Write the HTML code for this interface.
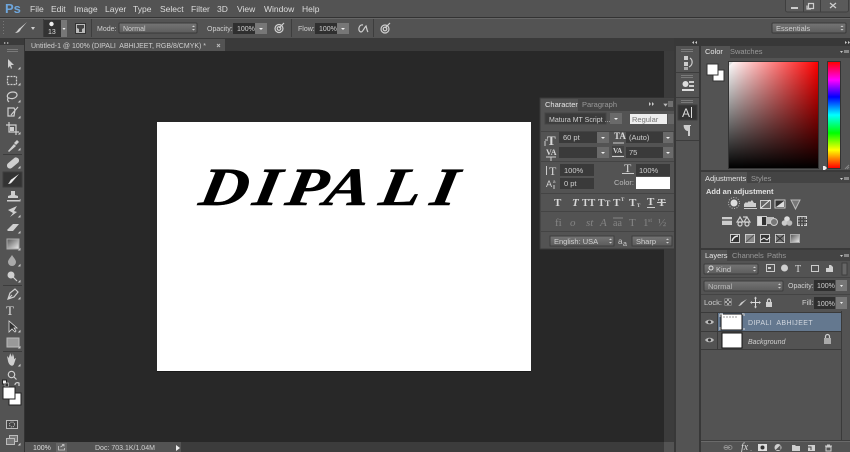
<!DOCTYPE html>
<html><head><meta charset="utf-8"><style>
html,body{margin:0;padding:0;background:#282828;width:850px;height:452px;overflow:hidden}
svg{display:block;filter:blur(.25px)}
text{font-family:"Liberation Sans",sans-serif;font-size:7.5px;fill:#d0d0d0}
.m{font-size:8.5px;fill:#dcdcdc}
.i{fill:none;stroke:#cfcfcf;stroke-width:1.2}
.g{fill:#cfcfcf}
.f{fill:none;stroke:#8a8a8a;stroke-width:1}
.t{font-family:"Liberation Serif",serif;font-size:11px;fill:#d8d8d8;font-weight:bold}
.u{font-family:"Liberation Serif",serif;font-size:11px;fill:#858585}
.b{fill:#e6e6e6}
</style></head><body>
<svg width="850" height="452" viewBox="0 0 850 452" xmlns="http://www.w3.org/2000/svg">
<defs>
<linearGradient id="h" x1="0" x2="1" y1="0" y2="0"><stop offset="0" stop-color="#fff"/><stop offset="1" stop-color="#f00"/></linearGradient>
<linearGradient id="v" x1="0" x2="0" y1="0" y2="1"><stop offset="0" stop-color="#000" stop-opacity="0"/><stop offset="1" stop-color="#000"/></linearGradient>
<linearGradient id="hue" x1="0" x2="0" y1="0" y2="1"><stop offset="0" stop-color="#f00"/><stop offset=".17" stop-color="#f0f"/><stop offset=".33" stop-color="#00f"/><stop offset=".5" stop-color="#0ff"/><stop offset=".67" stop-color="#0f0"/><stop offset=".83" stop-color="#ff0"/><stop offset="1" stop-color="#f00"/></linearGradient>
<linearGradient id="gr" x1="0" x2="1" y1="0" y2="1"><stop offset="0" stop-color="#555"/><stop offset="1" stop-color="#eee"/></linearGradient>
<linearGradient id="sel" x1="0" x2="0" y1="0" y2="1"><stop offset="0" stop-color="#757575"/><stop offset="1" stop-color="#5c5c5c"/></linearGradient>
</defs>

<!-- chrome -->
<rect width="850" height="452" fill="#282828"/>
<rect width="850" height="38" fill="#535353"/>
<rect y="17" width="850" height="1" fill="#333"/>
<rect y="18" width="850" height="1" fill="#666"/>
<rect y="38" width="850" height="13" fill="#3a3a3a"/>

<!-- menu -->
<text x="5" y="13" style="font-size:13px;font-weight:bold;fill:#6ea6dc">Ps</text>
<text class="m" x="30" y="12">File</text><text class="m" x="51" y="12">Edit</text><text class="m" x="74" y="12">Image</text><text class="m" x="105" y="12">Layer</text><text class="m" x="133" y="12">Type</text><text class="m" x="160" y="12">Select</text><text class="m" x="191" y="12">Filter</text><text class="m" x="217" y="12">3D</text><text class="m" x="237" y="12">View</text><text class="m" x="264" y="12">Window</text><text class="m" x="302" y="12">Help</text>
<!-- window controls -->
<rect x="785.500" y="-2" width="63" height="14" rx="2" fill="#5a5a5a" stroke="#3f3f3f"/>
<path d="M803.500 0v12M820.500 0v12" stroke="#3f3f3f"/>
<rect x="791" y="7" width="7" height="2" fill="#ccc"/>
<path d="M808.500 3.500h5v5h-5zM807 5.500v3.500h4" class="i" stroke-width=".9"/>
<path d="M830 3l6 5M836 3l-6 5" class="i"/>

<!-- options bar -->
<path d="M3.500 21v15" stroke="#777" stroke-dasharray="1 2"/>
<path d="M15 33c4 0 5-2 6-4l6-7-7 6c-2 1-2 3-5 5z" class="g"/>
<path d="M31 27l4 0-2 3z" class="g"/>
<path d="M43.500 19v18M91.500 19v18M291.500 19v18M373.500 19v18" stroke="#3d3d3d"/>
<rect x="44" y="20" width="17" height="17" fill="#333"/>
<circle cx="51.500" cy="24" r="2.200" fill="#eee"/>
<text x="48" y="34" style="font-size:7px;fill:#ddd">13</text>
<rect x="61" y="20" width="6" height="17" fill="#777"/><path d="M62.500 28h3l-1.500 2z" fill="#eee"/>
<rect x="75.500" y="23.500" width="10" height="10" fill="#bbb" stroke="#333"/><path d="M77 25h7v3l-2 1v3h-3v-3l-2-1z" fill="#444"/>
<text x="97" y="31" style="font-size:7px">Mode:</text>
<rect x="119" y="23" width="78" height="10" rx="1" fill="url(#sel)" stroke="#3a3a3a"/><text x="123" y="31" style="font-size:7px">Normal</text><path d="M192 27l1.500-1.500 1.500 1.500zM192 29l1.500 1.500 1.500-1.500z" class="g"/>
<text x="207" y="31" style="font-size:7px">Opacity:</text>
<rect x="233" y="23" width="22" height="11" fill="#2f2f2f"/><text x="237" y="31" style="font-size:7px">100%</text>
<rect x="255" y="23" width="12" height="11" fill="#777"/><path d="M259 28h4l-2 2z" fill="#eee"/>
<circle cx="279" cy="28.500" r="4" class="i"/><circle cx="279" cy="28.500" r="1.800" class="i"/><path d="M279 28l5-5" class="i"/>
<text x="298" y="31" style="font-size:7px">Flow:</text>
<rect x="315" y="23" width="22" height="11" fill="#2f2f2f"/><text x="319" y="31" style="font-size:7px">100%</text>
<rect x="337" y="23" width="12" height="11" fill="#777"/><path d="M341 28h4l-2 2z" fill="#eee"/>
<path d="M363 25c-4-1-6 6-2 7 2 0 3-4 5-6 1 3 1 5 2 6" class="i"/>
<circle cx="385" cy="29" r="4" class="i"/><circle cx="385" cy="29" r="1.800" class="i"/><path d="M385 28l5-5" class="i"/>
<rect x="772" y="23" width="74" height="10" rx="1" fill="url(#sel)" stroke="#3a3a3a"/><text x="776" y="31">Essentials</text><path d="M840.500 27l1.500-1.500 1.500 1.500zM840.500 29l1.500 1.500 1.500-1.500z" class="g"/>

<!-- tab -->
<rect x="25" y="39" width="200" height="12" fill="#535353"/>
<text x="31" y="48" style="font-size:7px;fill:#cfcfcf">Untitled-1 @ 100% (DIPALI&#160; ABHIJEET, RGB/8/CMYK) *</text>
<path d="M217 44l3 3M220 44l-3 3" stroke="#bbb"/>

<!-- left toolbar -->
<rect x="0" y="38" width="25" height="414" fill="#535353"/>
<rect x="0" y="38" width="25" height="7" fill="#3a3a3a"/>
<rect x="24" y="38" width="1" height="414" fill="#333"/>
<path d="M4 42l2 1-2 1zM7 42l2 1-2 1z" fill="#bbb"/>
<path d="M7 49.500h11M7 51.500h11" stroke="#7a7a7a"/>
<path d="M3 154.500h19M3 285.500h19M3 351.500h19" stroke="#3c3c3c"/>
<g>
<path d="M8 59v9l2-2 1 3 1-1-1-3h3zM15 62v5M13 64.500h4" class="g"/>
<rect x="7.500" y="76.500" width="9" height="8" class="i" stroke-dasharray="2 1"/>
<path d="M8 98c-2-3 1-6 5-6s5 3 3 5-5 2-7 1zM8 98c-1 2 0 3 1 4" class="i"/>
<path d="M8 108h6l1 2-1 6H8zM11 115l7-8" class="i"/>
<path d="M9 122v10h10M6 125h10v10" class="i" stroke-width="1.300"/><rect x="10" y="127" width="4" height="4" class="g"/>
<path d="M8 151l6-7 2 2-7 6zM14 143l3-3 2 2-3 3z" class="g"/>
<rect x="6" y="160" width="14" height="6" rx="3" transform="rotate(-40 13 163)" class="g"/>
<path d="M11 191h4v4l3 1v2H8v-2l3-1zM7 200h12v1.500H7z" class="g"/>
<path d="M8 210l9-4-3 5 3 1-7 5 3-4-5-3z" class="g"/>
<path d="M7 230l6-6h6l-6 7H8z" class="g"/>
<rect x="7" y="239" width="12" height="10" fill="url(#gr)" stroke="#aaa"/>
<path d="M12 255c-2 3-4 5-4 7a4 4 0 0 0 8 0c0-2-2-4-4-7z" fill="#aaa"/>
<circle cx="11" cy="275" r="3.500" class="g"/><path d="M13 277l4 4" class="i" stroke-width="2"/>
<path d="M8 299l2-6 5-4 3 3-4 5zM8 299l4-4" class="i"/>
<text x="6" y="315" style="font-family:'Liberation Serif',serif;font-size:13px;fill:#ddd">T</text>
<path d="M9 321v11l3-3 3 3 1-1-2-3h3z" fill="#333" stroke="#ddd" stroke-width=".8"/>
<rect x="7" y="338" width="12" height="9" fill="#999" stroke="#bbb"/>
<path d="M8 361l-1-5 2 2v-4l1 3v-4l2 4v-4l1 4 1-3v5l2-1-2 6c-1 3-5 2-6-3z" class="g"/>
<circle cx="11.500" cy="374.500" r="3.200" class="i" stroke-width="1.400"/><path d="M14 377l2.500 2.500" class="i" stroke-width="2"/>
<rect x="2.500" y="380" width="4" height="4" fill="#eee" stroke="#222"/><rect x="5" y="383" width="3.500" height="3.500" fill="#333" stroke="#ddd" stroke-width=".6"/>
<path d="M15 385c0-2 2-3 4-2v3" class="i"/>
<rect x="9" y="393" width="12" height="12" fill="#fff" stroke="#222"/>
<rect x="3" y="387" width="12" height="12" fill="#fff" stroke="#222"/>
<rect x="6.500" y="420.500" width="11" height="8" fill="#444" stroke="#bbb"/><circle cx="12" cy="424.500" r="2.500" fill="none" stroke="#ccc" stroke-dasharray="1 1"/>
<rect x="9.500" y="435.500" width="8" height="6" fill="#777" stroke="#bbb"/><rect x="6.500" y="438.500" width="8" height="6" fill="#777" stroke="#bbb"/>
</g>
<path d="M19 69h1v-1zM19 85h1v-1zM19 102h1v-1zM19 118h1v-1zM19 134h1v-1zM19 150h1v-1zM19 168h1v-1zM19 201h1v-1zM19 217h1v-1zM19 233h1v-1zM19 250h1v-1zM19 266h1v-1zM19 282h1v-1zM19 299h1v-1zM19 332h1v-1zM19 348h1v-1zM19 366h1v-1zM19 445h1v-1z" stroke="#ccc"/>
<rect x="3" y="172" width="19" height="15" fill="#333" stroke="#3e3e3e"/>
<path d="M8 184c3 0 4-2 5-3l6-7-7 5c-2 1-2 3-4 5z" fill="#eee"/>

<!-- document -->
<rect x="25" y="51" width="639" height="391" fill="#282828"/>
<rect x="157" y="122" width="374" height="249" fill="#fff"/>
<rect x="157" y="371" width="374" height="1" fill="#1a1a1a"/>
<g transform="matrix(1.25,0,-0.18,1,0,205)">
<text y="0" x="158 201 227 258 302 343" style="font-family:'Liberation Serif',serif;font-size:54px;font-style:italic;font-weight:bold;fill:#000;stroke:#000;stroke-width:.5">DIPALI</text>
</g>

<!-- scrollbars / status -->
<rect x="664" y="51" width="10" height="391" fill="#3c3c3c"/>
<rect x="25" y="442" width="639" height="10" fill="#3c3c3c"/>
<rect x="25" y="442" width="156" height="10" fill="#535353"/>
<rect x="664" y="442" width="10" height="10" fill="#535353"/>
<text x="33" y="450" style="font-size:7px;fill:#ddd">100%</text>
<rect x="56" y="443" width="11" height="9" fill="#666"/><path d="M58.500 446v4h6v-2M60.500 447l3-2M62 444.500h2v2" fill="none" stroke="#ccc" stroke-width=".8"/>
<text x="95" y="450" style="font-size:7px">Doc: 703.1K/1.04M</text>
<path d="M176 445v6l4-3z" fill="#eee"/>

<!-- character panel -->
<rect x="540" y="98" width="135" height="151" fill="#535353" stroke="#3a3a3a"/>
<rect x="541" y="99" width="133" height="12" fill="#444"/>
<rect x="541" y="99" width="37" height="12" fill="#535353"/>
<text class="b" x="545" y="107">Character</text>
<text x="582" y="107" style="fill:#999">Paragraph</text>
<path d="M649 102l2 2-2 2zM652 102l2 2-2 2z" fill="#ccc"/><path d="M664 104h3l-1.500 2zM668 102h5M668 104h5M668 106h5" stroke="#bbb" stroke-width=".7" fill="#bbb"/>
<rect x="545" y="113" width="61" height="11" fill="#3b3b3b" stroke="#444"/><text x="549" y="122" style="font-size:7px">Matura MT Script ...</text>
<rect x="610" y="113" width="12" height="11" fill="#6a6a6a"/><path d="M614 118h4l-2 2z" fill="#eee"/>
<rect x="630" y="114" width="37" height="10" fill="#eee"/><text x="632" y="122" style="fill:#777">Regular</text>
<rect x="668" y="114" width="6" height="10" fill="#666"/>
<path d="M541 131.500h133" stroke="#444"/>
<text x="547" y="145" class="t" style="font-size:13px">T</text><path d="M545 141v5M545 140h3" stroke="#ccc"/>
<rect x="559" y="132" width="39" height="11" fill="#3a3a3a"/><text x="563" y="140">60 pt</text>
<rect x="597" y="132" width="12" height="11" fill="#6a6a6a"/><path d="M601 137h4l-2 2z" fill="#eee"/>
<text x="614" y="139" class="t" style="font-size:9px">TA</text><path d="M613 143h11" stroke="#ccc"/>
<rect x="626" y="132" width="37" height="11" fill="#3a3a3a"/><text x="629" y="140">(Auto)</text>
<rect x="663" y="132" width="10" height="11" fill="#6a6a6a"/><path d="M666 137h4l-2 2z" fill="#eee"/>
<text x="546" y="155" class="t" style="font-size:8px">VA</text><path d="M546 157h10M551 157v4" stroke="#ccc"/>
<rect x="559" y="147" width="39" height="11" fill="#3a3a3a"/>
<rect x="597" y="147" width="12" height="11" fill="#6a6a6a"/><path d="M601 152h4l-2 2z" fill="#eee"/>
<rect x="612" y="146" width="12" height="9" fill="#444"/><text x="613" y="153" class="t" style="font-size:7px">VA</text><path d="M612 156.500h12" stroke="#ccc"/>
<rect x="626" y="147" width="37" height="11" fill="#3a3a3a"/><text x="629" y="155">75</text>
<rect x="663" y="147" width="10" height="11" fill="#6a6a6a"/><path d="M666 152h4l-2 2z" fill="#eee"/>
<path d="M541 161.500h133" stroke="#444"/>
<text x="549" y="175" class="t" style="font-size:12px;font-weight:normal">T</text><path d="M546.500 166v9" stroke="#ccc"/>
<rect x="560" y="164" width="34" height="12" fill="#3a3a3a"/><text x="564" y="173">100%</text>
<text x="624" y="172" class="t" style="font-size:12px;font-weight:normal">T</text><path d="M622 173.500h12" stroke="#ccc"/>
<rect x="636" y="164" width="34" height="12" fill="#3a3a3a"/><text x="639" y="173">100%</text>
<text x="546" y="187" style="font-size:9px">A</text><text x="553" y="183" style="font-size:4.500px">a</text><path d="M554 185v4" stroke="#ccc"/>
<rect x="560" y="178" width="34" height="11" fill="#3a3a3a"/><text x="564" y="186">0 pt</text>
<text x="614" y="185" style="fill:#bbb">Color:</text>
<rect x="636" y="177" width="34" height="12" fill="#fff"/>
<path d="M541 193.500h133" stroke="#444"/>
<text class="t" x="554" y="206">T</text><text class="t" x="572" y="206" style="font-style:italic">T</text><text class="t" x="582" y="206" style="font-size:10px">TT</text><text class="t" x="598" y="206" style="font-size:10px">T</text><text class="t" x="605" y="206" style="font-size:8px">T</text><text class="t" x="613" y="206">T</text><text class="t" x="621" y="201" style="font-size:5px">T</text><text class="t" x="629" y="206">T</text><text class="t" x="637" y="207" style="font-size:5px">T</text><text class="t" x="647" y="205">T</text><path d="M647 207.500h8" stroke="#ccc"/><text class="t" x="658" y="206">T</text><path d="M657 202.500h9" stroke="#ccc"/>
<path d="M541 211.500h133" stroke="#444"/>
<text class="u" x="555" y="226">fi</text><text class="u" x="570" y="226" style="font-style:italic">o</text><text class="u" x="586" y="226" style="font-style:italic">st</text><text class="u" x="600" y="226" style="font-style:italic">A</text><text class="u" x="613" y="226" style="font-size:10px">aa</text><path d="M613 218h10" stroke="#858585"/><text class="u" x="629" y="226">T</text><text class="u" x="643" y="226">1</text><text class="u" x="648" y="222" style="font-size:6px">st</text><text class="u" x="658" y="226">½</text>
<path d="M541 231.500h133" stroke="#444"/>
<rect x="550" y="236" width="64" height="10" fill="url(#sel)" stroke="#3d3d3d"/><text x="554" y="244">English: USA</text><path d="M609 240l1.500-1.500 1.500 1.500zM609 242l1.500 1.500 1.500-1.500z" class="g"/>
<text x="618" y="244" style="font-size:8px;fill:#ccc">a</text><text x="623" y="246" style="font-size:7px;fill:#ccc">a</text>
<rect x="632" y="236" width="40" height="10" fill="url(#sel)" stroke="#3d3d3d"/><text x="636" y="244">Sharp</text><path d="M666 240l1.500-1.500 1.500 1.500zM666 242l1.500 1.500 1.500-1.500z" class="g"/>

<!-- dock -->
<rect x="674" y="38" width="176" height="414" fill="#383838"/>
<rect x="676" y="46" width="23" height="406" fill="#535353"/>
<path d="M694 41l-2 1.500 2 1.500zM697 41l-2 1.500 2 1.500zM845 41l2 1.500-2 1.500zM848 41l2 1.500-2 1.500z" fill="#ccc"/>
<path d="M681 49.500h12M681 51.500h12M681 75.500h12M681 77.500h12M681 100.500h12M681 102.500h12" stroke="#7a7a7a"/>
<path d="M676 72.500h23M676 97.500h23M676 140.500h23" stroke="#3c3c3c"/>
<rect x="684" y="56" width="4" height="4" fill="#ccc"/><rect x="684" y="62" width="4" height="4" fill="#ccc"/><rect x="684" y="67" width="4" height="3" fill="#aaa"/><path d="M690 58c3 2 3 7-1 9" class="i"/>
<circle cx="685.500" cy="84" r="3" fill="#ddd"/><rect x="689" y="81" width="5" height="2" fill="#ccc"/><rect x="689" y="85" width="5" height="2" fill="#ccc"/><rect x="682" y="89" width="12" height="2" fill="#ddd"/>
<rect x="678" y="105" width="19" height="15" fill="#333" stroke="#3e3e3e"/>
<text x="682" y="117" style="font-size:12px;fill:#ddd">A</text><path d="M691.500 107v11" stroke="#ddd"/>
<path d="M684 125h7v1h-1v10h-2v-5c-4 0-5-6-4-6zM690 126v10" fill="#ccc"/>

<!-- right panels -->
<rect x="701" y="46" width="149" height="406" fill="#535353"/>
<!-- color -->
<rect x="701" y="46" width="149" height="12" fill="#444"/>
<rect x="701" y="46" width="29" height="12" fill="#535353"/>
<text class="b" x="705" y="54">Color</text><text x="730" y="54" style="fill:#999">Swatches</text>
<path d="M840 51h3l-1.500 2z" fill="#ccc"/><rect x="844" y="50" width="5" height="3" fill="#888"/>
<rect x="713" y="70" width="11" height="11" fill="#fff" stroke="#333"/>
<rect x="707" y="64" width="11" height="11" fill="#fff" stroke="#333"/>
<rect x="729" y="62" width="89" height="106" fill="url(#h)"/>
<rect x="729" y="62" width="89" height="106" fill="url(#v)"/>
<rect x="728.500" y="61.500" width="90" height="107" fill="none" stroke="#333"/>
<path d="M729 62h4l-4 4z" fill="#ddd"/>
<rect x="828" y="62" width="12" height="106" fill="url(#hue)"/>
<rect x="827.500" y="61.500" width="13" height="107" fill="none" stroke="#333"/>
<path d="M823 166h2l2 2-2 2h-2z" fill="#eee"/>
<path d="M845 169l4-4M847 169l2-2" stroke="#888"/>
<!-- adjustments -->
<rect x="701" y="170" width="149" height="2" fill="#3a3a3a"/>
<rect x="701" y="172" width="149" height="11" fill="#444"/>
<rect x="701" y="172" width="46" height="11" fill="#535353"/>
<text class="b" x="705" y="181">Adjustments</text><text x="751" y="181" style="fill:#999">Styles</text>
<path d="M840 178h3l-1.500 2z" fill="#ccc"/><rect x="844" y="177" width="5" height="3" fill="#888"/>
<text x="706" y="194" style="font-weight:bold;fill:#e2e2e2">Add an adjustment</text>
<g>
<circle cx="734" cy="203" r="3.500" fill="#ddd"/><circle cx="734" cy="203" r="5.500" fill="none" stroke="#bbb" stroke-dasharray="1 1.500"/>
<path d="M744 207v-3l2-2 1 1 2-2 1 1 2-2 2 3 2 0v4z" class="g"/><path d="M744 208.500h13" stroke="#ccc"/>
<rect x="760.500" y="200.500" width="10" height="8" fill="#666" stroke="#ccc"/><path d="M761 208l9-8" stroke="#eee"/>
<rect x="775" y="200" width="10" height="8" fill="#333" stroke="#ccc"/><path d="M776 207l8-6v6z" fill="#ddd"/>
<path d="M791 200h9l-4.500 9z" fill="#777" stroke="#bbb"/>
<rect x="722" y="217" width="10" height="8" fill="#ccc"/><path d="M722 220h10" stroke="#777" stroke-width="2"/>
<path d="M740 217l-3 5h6zM747 217l-3 5h6zM743 217h4" class="i" stroke-width=".9"/><circle cx="740" cy="224" r="2" class="i" stroke-width=".8"/><circle cx="747" cy="224" r="2" class="i" stroke-width=".8"/>
<rect x="757.500" y="216.500" width="9" height="9" fill="#333" stroke="#ccc"/><rect x="758" y="217" width="4" height="8" fill="#ddd"/>
<rect x="766" y="217" width="8" height="7" fill="#bbb"/><circle cx="774" cy="222" r="3.500" fill="#777" stroke="#ccc"/>
<circle cx="787" cy="219" r="2.800" fill="#ddd"/><circle cx="784.500" cy="223" r="2.800" fill="#ccc"/><circle cx="789.500" cy="223" r="2.800" fill="#bbb"/>
<rect x="797.500" y="216.500" width="9" height="9" fill="#777" stroke="#ccc"/><path d="M800.500 217v9M803.500 217v9M798 219.500h9M798 222.500h9" stroke="#444"/>
<rect x="730.500" y="234.500" width="9" height="8" fill="#333" stroke="#ccc"/><path d="M732 241c1-3 3-5 6-5" stroke="#eee" stroke-width="1.500" fill="none"/>
<rect x="745.500" y="234.500" width="9" height="8" fill="#888" stroke="#ccc"/><path d="M746 242l8-7" stroke="#555"/>
<rect x="760.500" y="234.500" width="9" height="8" fill="#333" stroke="#ccc"/><path d="M761 240l3-2 3 2 3-3" stroke="#eee" fill="none"/>
<rect x="775.500" y="234.500" width="9" height="8" fill="#777" stroke="#ccc"/><path d="M776 235l8 7M784 235l-8 7" stroke="#333"/>
<rect x="790.500" y="234.500" width="9" height="8" fill="url(#gr)" stroke="#aaa"/>
</g>
<!-- layers -->
<rect x="701" y="248" width="149" height="2" fill="#3a3a3a"/>
<rect x="701" y="250" width="149" height="11" fill="#444"/>
<rect x="701" y="250" width="26" height="11" fill="#535353"/>
<text class="b" x="705" y="258">Layers</text><text x="732" y="258" style="fill:#999">Channels</text><text x="767" y="258" style="fill:#999">Paths</text>
<path d="M840 255h3l-1.500 2z" fill="#ccc"/><rect x="844" y="254" width="5" height="3" fill="#888"/>
<rect x="704" y="264" width="54" height="10" rx="1" fill="url(#sel)" stroke="#3d3d3d"/><circle cx="711" cy="268" r="2" fill="none" stroke="#ddd"/><path d="M709 271l-1.500 1.500" stroke="#ddd"/><text x="716" y="272">Kind</text><path d="M753 268l1.500-1.500 1.500 1.500zM753 270l1.500 1.500 1.500-1.500z" class="g"/>
<rect x="766.500" y="264.500" width="8" height="7" fill="#555" stroke="#ccc"/><rect x="768" y="267" width="3" height="2" fill="#ccc"/>
<circle cx="784.500" cy="268" r="3.500" class="g"/><text x="795" y="272" style="font-family:'Liberation Serif',serif;font-size:10px;fill:#ddd">T</text>
<rect x="811.500" y="265.500" width="7" height="6" fill="none" stroke="#ccc"/>
<path d="M826 272v-4h3v-3h2l2 2v5z" class="g"/>
<rect x="842" y="263" width="5" height="12" fill="#666" stroke="#3e3e3e"/>
<path d="M701 277.500h149" stroke="#444"/>
<rect x="704" y="281" width="79" height="10" rx="1" fill="url(#sel)" stroke="#3d3d3d"/><text x="708" y="289" style="fill:#bbb">Normal</text><path d="M778 285l1.500-1.500 1.500 1.500zM778 287l1.500 1.500 1.500-1.500z" class="g"/>
<text x="788" y="288" style="font-size:7px">Opacity:</text>
<rect x="814" y="280" width="21" height="11" fill="#2f2f2f"/><text x="817" y="288" style="font-size:7px">100%</text>
<rect x="836" y="280" width="11" height="11" fill="#777"/><path d="M840 285h3l-1.500 2z" fill="#eee"/>
<path d="M701 294.500h149" stroke="#444"/>
<text x="704" y="305">Lock:</text>
<rect x="724.500" y="298.500" width="7" height="7" fill="#aaa"/><path d="M725 299h2v2h-2zM729 299h2v2h-2zM727 301h2v2h-2zM725 303h2v2h-2zM729 303h2v2h-2z" fill="#555"/>
<path d="M738 306c3 0 4-2 5-3l4-4-5 3c-2 1-2 3-4 4z" class="g"/>
<path d="M755.500 298v9M751 302.500h9" stroke="#ddd"/><path d="M755.500 296.500l-1.500 2h3zM755.500 308.500l-1.500-2h3zM750 302.500l2-1.500v3zM761 302.500l-2-1.500v3z" class="g"/>
<rect x="766" y="302" width="6" height="5" class="g"/><path d="M767.500 302v-1.500a1.500 1.500 0 0 1 3 0V302" class="i" stroke-width=".8"/>
<text x="802" y="305">Fill:</text>
<rect x="814" y="297" width="21" height="12" fill="#2f2f2f"/><text x="817" y="306" style="font-size:7px">100%</text>
<rect x="836" y="297" width="11" height="12" fill="#777"/><path d="M840 302h3l-1.500 2z" fill="#eee"/>
<path d="M701 312.500h140" stroke="#3a3a3a"/>
<rect x="717" y="313" width="124" height="18" fill="#64788f"/>
<rect x="701" y="313" width="16" height="18" fill="#535353"/>
<path d="M717.500 313v36M701 349.500h140M701 331.500h140M841.500 311v130" stroke="#3a3a3a"/>
<path d="M705 322c2-3 7-3 9 0-2 3-7 3-9 0z" fill="#bbb"/><circle cx="709.500" cy="322" r="1.500" fill="#333"/>
<path d="M705 340c2-3 7-3 9 0-2 3-7 3-9 0z" fill="#bbb"/><circle cx="709.500" cy="340" r="1.500" fill="#333"/>
<rect x="721" y="314" width="21" height="16" fill="#fff" stroke="#111"/>
<path d="M723 317h15" stroke="#999" stroke-dasharray="2 1"/>
<path d="M720 314v3M720 314h3M742 314h2v2M720 330v-3M744 330v-2" stroke="#ddd"/>
<text x="748" y="325" style="font-size:7px;letter-spacing:.4px;fill:#d0d6de">DIPALI&#160; ABHIJEET</text>
<rect x="722" y="333" width="20" height="15" fill="#fff" stroke="#111"/>
<text x="748" y="344" style="font-size:7px;font-style:italic;fill:#d0d0d0">Background</text>
<rect x="824" y="338" width="7" height="6" fill="#aaa"/><path d="M825.500 338v-1.500a2 2 0 0 1 4 0V338" class="i" stroke="#aaa"/>
<!-- footer -->
<rect x="701" y="441" width="149" height="1" fill="#6a6a6a"/>
<rect x="701" y="440" width="149" height="1" fill="#3e3e3e"/>
<g>
<path d="M724 447.500h6" stroke="#999"/><rect x="724" y="445.500" width="4" height="4" rx="2" class="f"/><rect x="728" y="445.500" width="4" height="4" rx="2" class="f"/>
<text x="741" y="450" style="font-family:'Liberation Serif',serif;font-style:italic;font-size:10px;fill:#ddd">fx</text><text x="750" y="451" style="fill:#ccc">.</text>
<rect x="758" y="444" width="9" height="7" fill="#ddd"/><circle cx="762.500" cy="447.500" r="2" fill="#333"/>
<circle cx="778" cy="447.500" r="3.500" class="g"/><path d="M775.500 450l5-5v5z" fill="#555"/>
<path d="M792 445h3l1 1h4v5h-8z" class="g"/>
<path d="M808 445h7v6h-7z" class="g"/><path d="M808 447h3v3" fill="none" stroke="#444"/>
<path d="M825 446h7M826 447h5v4h-5zM827 445h3" fill="none" stroke="#ccc"/>
</g>
</svg>
</body></html>
